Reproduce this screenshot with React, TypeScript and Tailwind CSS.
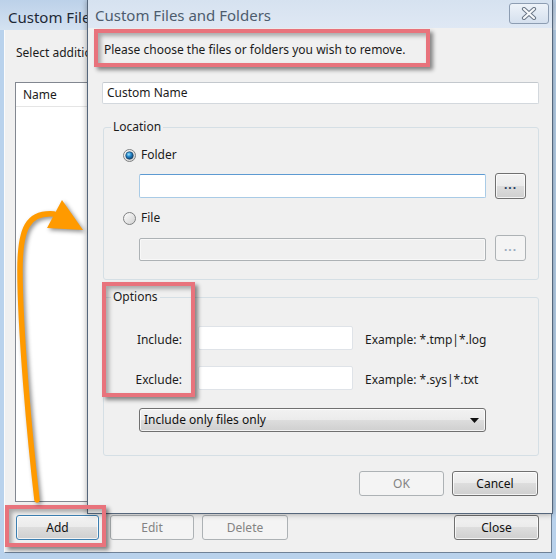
import React from 'react';

const btnOn =
  'h-[25px] rounded-[3px] border border-[#707070] text-[#111] bg-[linear-gradient(to_bottom,#f2f2f2_0%,#ebebeb_50%,#dddddd_50%,#cfcfcf_100%)] shadow-[inset_0_0_0_1px_rgba(255,255,255,0.75)] flex items-center justify-center';
const btnOff =
  'h-[25px] rounded-[3px] border border-[#adb2b5] text-[#838383] bg-[#f4f4f4] flex items-center justify-center';
const mark =
  'absolute border-4 border-[#e8737c] shadow-[3px_3px_4px_rgba(0,0,0,0.45),inset_3px_3px_4px_rgba(0,0,0,0.3)] pointer-events-none';

const Radio: React.FC<{ checked?: boolean }> = ({ checked }) => (
  <svg width="13" height="13" viewBox="0 0 13 13">
    <defs>
      <linearGradient id={checked ? 'ringOn' : 'ringOff'} x1="0" y1="0" x2="1" y2="1">
        <stop offset="0" stopColor="#ffffff" />
        <stop offset="1" stopColor="#cfcfcf" />
      </linearGradient>
      <radialGradient id="dot" cx="0.4" cy="0.35" r="0.7">
        <stop offset="0" stopColor="#9be6ff" />
        <stop offset="0.45" stopColor="#2384c9" />
        <stop offset="1" stopColor="#0b3a66" />
      </radialGradient>
    </defs>
    <circle cx="6.5" cy="6.5" r="6" fill={`url(#${checked ? 'ringOn' : 'ringOff'})`} stroke="#7f8182" />
    {checked && <circle cx="6.5" cy="6.5" r="3.8" fill="url(#dot)" stroke="#1c3f5e" strokeWidth="0.6" />}
  </svg>
);

const Browse: React.FC<{ disabled?: boolean }> = ({ disabled }) => (
  <div className={`${disabled ? btnOff : btnOn} w-[31px] !h-[26px]`}>
    <span className={`text-[12px] font-bold tracking-[1px] leading-none -mt-[2px] ${disabled ? 'text-[#9aabbd]' : 'text-[#1e3a5c]'}`}>...</span>
  </div>
);

const App: React.FC = () => {
  return (
    <div className="relative w-[556px] h-[559px] overflow-hidden bg-[#b9d2ec] font-['Noto_Sans',sans-serif] text-[12px] leading-[16px] text-[#1b1b1b]">
      {/* Back window */}
      <div className="flex flex-col h-full">
        <div className="h-[30px] shrink-0 bg-[linear-gradient(to_bottom,#bcd1e9,#d4e2f1)] pl-[8px] flex items-center text-[15px] text-[#1e2936] pt-[3px]">
          <span className="w-[79px] overflow-hidden whitespace-nowrap">Custom Files and Folders</span>
        </div>
        <div className="flex-1 mx-[4px] mb-[6px] bg-[#f0f0f0] border-l border-white/70 border-r border-r-[#6f8196] border-b border-b-[#6f8196] flex flex-col px-[10px] pt-[15px]">
          <div className="h-[16px] pl-[1px] w-[72px] overflow-hidden whitespace-nowrap">Select additional files and folders to remove.</div>
          <div className="mt-[21px] h-[420px] bg-white border border-[#828790] flex flex-col">
            <div className="h-[24px] border-b border-[#e5e5e5] flex items-center pl-[7px]">Name</div>
          </div>
          <div className="mt-[13px] flex items-center">
            <div className={`${btnOn} w-[83px] ml-[1px] !border-[#3c7fb1]`}>Add</div>
            <div className={`${btnOff} w-[84px] ml-[11px]`}>Edit</div>
            <div className={`${btnOff} w-[86px] ml-[8px]`}>Delete</div>
            <div className={`${btnOn} w-[85px] ml-auto mr-[2px]`}>Close</div>
          </div>
        </div>
      </div>

      {/* Front dialog */}
      <div className="absolute left-[87px] top-0 w-[466px] h-[514px] border-l border-r border-b border-[#55667b] flex flex-col bg-[#f0f0f0] shadow-[0_0_6px_rgba(0,0,0,0.35)]">
        <div className="h-[28px] shrink-0 bg-[linear-gradient(to_bottom,#d6e2f0,#dfe8f4)] flex items-start justify-between pl-[7px] pr-[3px]">
          <span className="text-[15px] leading-[28px] text-[#4d5c6e] mt-[1px]">Custom Files and Folders</span>
          <div className="mt-[3px] w-[40px] h-[21px] rounded-[3px] border border-[#8d9db2] bg-[linear-gradient(to_bottom,#eef3f9,#d5e0ee)] flex items-center justify-center">
            <svg width="16" height="13" viewBox="0 0 16 13">
              <path d="M3 2 L13 11 M13 2 L3 11" stroke="#6b7787" strokeWidth="4.2" strokeLinecap="round" />
              <path d="M3 2 L13 11 M13 2 L3 11" stroke="#f7f9fb" strokeWidth="2.2" strokeLinecap="round" />
            </svg>
          </div>
        </div>

        <div className="flex flex-col pl-[14px] pr-[13px]">
          <div className="mt-[13px] h-[16px] pl-[2px] leading-[18px]">Please choose the files or folders you wish to remove.</div>

          <div className="mt-[25px] h-[22px] bg-white border border-[#d3d8dd] border-t-[#c3c8cd] rounded-[2px] flex items-center pl-[4px]">
            Custom Name
          </div>

          <fieldset className="mt-[15px] ml-[1px] border border-[#d5dfe5] rounded-[3px] pb-[18px]">
            <legend className="ml-[7px] px-[2px] leading-[16px]">Location</legend>
            <div className="mt-[12px] h-[16px] pl-[19px] flex items-center gap-[5px]">
              <Radio checked />
              <span>Folder</span>
            </div>
            <div className="mt-[10px] h-[26px] pl-[35px] flex items-center gap-[9px]">
              <div className="w-[347px] h-[24px] bg-white border border-[#a9cbe6] border-t-[#5d9ad2] rounded-[2px]" />
              <Browse />
            </div>
            <div className="mt-[11px] h-[16px] pl-[19px] flex items-center gap-[5px]">
              <Radio />
              <span>File</span>
            </div>
            <div className="mt-[9px] h-[26px] pl-[35px] flex items-start gap-[9px]">
              <div className="mt-[3px] w-[347px] h-[23px] bg-[#f0f0f0] border border-[#adb2b5] rounded-[2px] shadow-[inset_0_0_0_1px_#f8f8f8]" />
              <Browse disabled />
            </div>
          </fieldset>

          <fieldset className="mt-[9px] ml-[1px] border border-[#d5dfe5] rounded-[3px] pb-[23px]">
            <legend className="ml-[7px] px-[2px] leading-[16px]">Options</legend>
            <div className="mt-[21px] h-[24px] flex items-center">
              <span className="w-[78px] text-right mt-[4px]">Include:</span>
              <div className="ml-[16px] w-[155px] h-[24px] bg-white border border-[#dfe3e8] rounded-[2px]" />
              <span className="ml-[12px] mt-[4px]">Example: *.tmp|*.log</span>
            </div>
            <div className="mt-[16px] h-[24px] flex items-center">
              <span className="w-[78px] text-right mt-[4px]">Exclude:</span>
              <div className="ml-[16px] w-[155px] h-[24px] bg-white border border-[#dfe3e8] rounded-[2px]" />
              <span className="ml-[12px] mt-[4px]">Example: *.sys|*.txt</span>
            </div>
            <div className={`${btnOn} !justify-between mt-[18px] ml-[35px] w-[347px] !h-[24px] pl-[4px] pr-[6px]`}>
              <span>Include only files only</span>
              <svg width="9" height="5" viewBox="0 0 9 5">
                <path d="M0 0 H9 L4.5 5 Z" fill="#111" />
              </svg>
            </div>
          </fieldset>

          <div className="mt-[15px] flex justify-end gap-[8px] pr-[1px]">
            <div className={`${btnOff} w-[85px]`}>OK</div>
            <div className={`${btnOn} w-[86px]`}>Cancel</div>
          </div>
        </div>
      </div>

      {/* Annotations */}
      <div className={`${mark} left-[94px] top-[29px] w-[336px] h-[38px]`} />
      <div className={`${mark} left-[102px] top-[282px] w-[93px] h-[115px]`} />
      <div className={`${mark} left-[5px] top-[505px] w-[101px] h-[42px]`} />
      <svg className="absolute inset-0 pointer-events-none drop-shadow-[2px_2px_2px_rgba(0,0,0,0.45)]" width="556" height="559">
        <path d="M37 500 C30 440 20 330 20 270 C20 228 28 212 54 214" stroke="#ff9a00" strokeWidth="5.5" fill="none" strokeLinecap="round" />
        <polygon points="62,200 47,228 83,230" fill="#ff9a00" />
      </svg>
    </div>
  );
};

export default App;
